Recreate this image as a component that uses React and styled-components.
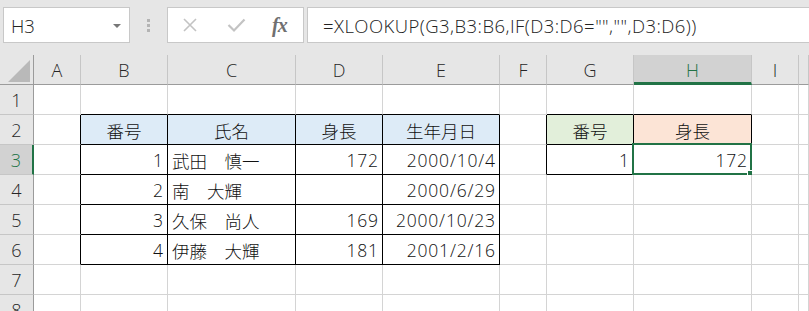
import React from "react";
import styled, { createGlobalStyle } from "styled-components";

const FONT = `"Open Sans", "Noto Sans CJK JP", sans-serif`;
const GREEN = "#217346";
const GRID = "#d4d4d4";
const HDR_LINE = "#c6c6c6";
const HDR_EDGE = "#9b9b9b";

const Global = createGlobalStyle`
  html, body { margin: 0; padding: 0; background: #fff; overflow: hidden; }
  body { font-family: ${FONT}; }
`;

const Page = styled.div`
  width: 809px;
  height: 311px;
  overflow: hidden;
  display: flex;
  flex-direction: column;
`;

const TopBar = styled.div`
  height: 55px;
  flex: none;
  background: #e6e6e6;
  display: flex;
  align-items: flex-start;
  padding: 7px 0 0 3px;
  box-sizing: border-box;
`;

const Box = styled.div`
  height: 36px;
  box-sizing: border-box;
  background: #fff;
  border: 1px solid #c8c8c8;
  display: flex;
  align-items: center;
`;

const NameBox = styled(Box)`
  width: 127px;
  padding: 0 8px 0 7px;
  justify-content: space-between;
  font-size: 18.5px;
  font-weight: 300;
  color: #222;
`;

const Caret = styled.span`
  width: 0;
  height: 0;
  border-left: 4px solid transparent;
  border-right: 4px solid transparent;
  border-top: 4px solid #777;
  margin-top: 1px;
`;

const Divider = styled.div`
  width: 37px;
  height: 36px;
  display: flex;
  flex-direction: column;
  align-items: center;
  justify-content: center;
  gap: 2px;
`;

const Dot = styled.span`
  width: 3px;
  height: 3px;
  background: #b4b4b4;
`;

const IconBox = styled(Box)`
  width: 137px;
  padding-left: 14px;
  gap: 29px;
`;

const Fx = styled.span`
  font-family: "Liberation Serif", "DejaVu Serif", serif;
  font-style: italic;
  font-weight: bold;
  font-size: 20px;
  color: #707070;
  margin-left: -3px;
  letter-spacing: -1px;
`;

const FormulaBox = styled(Box)`
  flex: 1;
  margin-left: 3px;
  border-right: none;
  padding-left: 15px;
  font-size: 18.5px;
  font-weight: 300;
  letter-spacing: 0.45px;
  color: #222;
`;

const Sheet = styled.div`
  display: grid;
  grid-template-columns: 34px 47px 87px 128px 87px 117px 47px 87px 118px 47px 1fr;
  grid-auto-rows: 30px;
  background: #fff;
`;

const Corner = styled.div`
  background: #e6e6e6;
  border-right: 1px solid ${HDR_EDGE};
  border-bottom: 1px solid ${HDR_EDGE};
  position: relative;
  overflow: hidden;
`;

const Tri = styled.div`
  position: absolute;
  right: 3px;
  bottom: 2px;
  width: 0;
  height: 0;
  border-left: 22px solid transparent;
  border-bottom: 22px solid #b9b9b9;
`;

const ColHead = styled.div`
  background: ${(p) => (p.$sel ? "#d2d2d2" : "#e6e6e6")};
  border-right: 1px solid ${HDR_LINE};
  border-bottom: ${(p) => (p.$sel ? `3px solid ${GREEN}` : `1px solid ${HDR_EDGE}`)};
  color: ${(p) => (p.$sel ? GREEN : "#262626")};
  font-size: 18px;
  font-weight: 300;
  display: flex;
  align-items: center;
  justify-content: center;
  padding-top: ${(p) => (p.$sel ? "2px" : "0")};
  box-sizing: border-box;
`;

const RowHead = styled.div`
  background: ${(p) => (p.$sel ? "#d2d2d2" : "#e6e6e6")};
  border-right: ${(p) => (p.$sel ? `2px solid ${GREEN}` : `1px solid ${HDR_EDGE}`)};
  border-bottom: 1px solid ${HDR_LINE};
  color: ${(p) => (p.$sel ? GREEN : "#262626")};
  font-size: 18px;
  font-weight: 300;
  display: flex;
  align-items: center;
  justify-content: center;
  padding-top: 1px;
  box-sizing: border-box;
`;

const Cell = styled.div`
  position: relative;
  box-sizing: border-box;
  background: ${(p) => p.$fill || "#fff"};
  border-right: 1px solid ${(p) => (p.$rb ? "#000" : GRID)};
  border-bottom: 1px solid ${(p) => (p.$bb ? "#000" : GRID)};
  font-size: 17.5px;
  font-weight: 300;
  color: #111;
  display: flex;
  align-items: center;
  justify-content: ${(p) =>
    p.$align === "right" ? "flex-end" : p.$align === "center" ? "center" : "flex-start"};
  letter-spacing: ${(p) => (p.$align === "right" ? "0.8px" : "0")};
  padding: 1px ${(p) => (p.$align === "right" ? "3.2px" : "4px")} 0 4px;
  white-space: nowrap;
`;

const Selection = styled.div`
  position: absolute;
  left: -2px;
  top: -2px;
  right: -1px;
  bottom: -1px;
  border: 2px solid ${GREEN};
  pointer-events: none;
`;

const Handle = styled.div`
  position: absolute;
  right: -3px;
  bottom: -3px;
  width: 6px;
  height: 6px;
  background: ${GREEN};
  box-shadow: 0 0 0 1px #fff;
`;

const COLS = ["A", "B", "C", "D", "E", "F", "G", "H", "I", ""];
const ROWS = [1, 2, 3, 4, 5, 6, 7, 8, 9];

const BLUE = "#ddebf7";
const data = {
  "2": {
    B: { v: "番号", a: "center", f: BLUE },
    C: { v: "氏名", a: "center", f: BLUE },
    D: { v: "身長", a: "center", f: BLUE },
    E: { v: "生年月日", a: "center", f: BLUE },
    G: { v: "番号", a: "center", f: "#e2efda" },
    H: { v: "身長", a: "center", f: "#fce4d6" },
  },
  "3": {
    B: { v: "1", a: "right" },
    C: { v: "武田　慎一" },
    D: { v: "172", a: "right" },
    E: { v: "2000/10/4", a: "right" },
    G: { v: "1", a: "right" },
    H: { v: "172", a: "right" },
  },
  "4": {
    B: { v: "2", a: "right" },
    C: { v: "南　大輝" },
    E: { v: "2000/6/29", a: "right" },
  },
  "5": {
    B: { v: "3", a: "right" },
    C: { v: "久保　尚人" },
    D: { v: "169", a: "right" },
    E: { v: "2000/10/23", a: "right" },
  },
  "6": {
    B: { v: "4", a: "right" },
    C: { v: "伊藤　大輝" },
    D: { v: "181", a: "right" },
    E: { v: "2001/2/16", a: "right" },
  },
};

const regions = [
  { c0: 1, c1: 4, r0: 2, r1: 6 },
  { c0: 6, c1: 7, r0: 2, r1: 3 },
];
const inRegion = (r, c) =>
  regions.some((g) => c >= g.c0 && c <= g.c1 && r >= g.r0 && r <= g.r1);

const XIcon = () => (
  <svg width="16" height="16" viewBox="0 0 16 16">
    <path d="M2 2 L14 14 M14 2 L2 14" stroke="#c3c3c3" strokeWidth="1.6" fill="none" />
  </svg>
);

const CheckIcon = () => (
  <svg width="19" height="16" viewBox="0 0 19 16">
    <path d="M1.5 8 L7 13.5 L17.5 2.5" stroke="#c3c3c3" strokeWidth="2.2" fill="none" />
  </svg>
);

export default function App() {
  return (
    <Page>
      <Global />
      <TopBar>
        <NameBox>
          <span>H3</span>
          <Caret />
        </NameBox>
        <Divider>
          <Dot />
          <Dot />
          <Dot />
        </Divider>
        <IconBox>
          <XIcon />
          <CheckIcon />
          <Fx>fx</Fx>
        </IconBox>
        <FormulaBox>=XLOOKUP(G3,B3:B6,IF(D3:D6="","",D3:D6))</FormulaBox>
      </TopBar>
      <Sheet>
        <Corner>
          <Tri />
        </Corner>
        {COLS.map((c, i) => (
          <ColHead key={"h" + i} $sel={c === "H"}>
            {c}
          </ColHead>
        ))}
        {ROWS.map((r) => (
          <React.Fragment key={r}>
            <RowHead $sel={r === 3}>{r}</RowHead>
            {COLS.map((c, ci) => {
              const d = (data[r] || {})[c] || {};
              const rb = inRegion(r, ci) || inRegion(r, ci + 1);
              const bb = inRegion(r, ci) || inRegion(r + 1, ci);
              const sel = r === 3 && c === "H";
              return (
                <Cell key={c + ci} $align={d.a} $fill={d.f} $rb={rb} $bb={bb}>
                  {d.v}
                  {sel && (
                    <>
                      <Selection />
                      <Handle />
                    </>
                  )}
                </Cell>
              );
            })}
          </React.Fragment>
        ))}
      </Sheet>
    </Page>
  );
}
